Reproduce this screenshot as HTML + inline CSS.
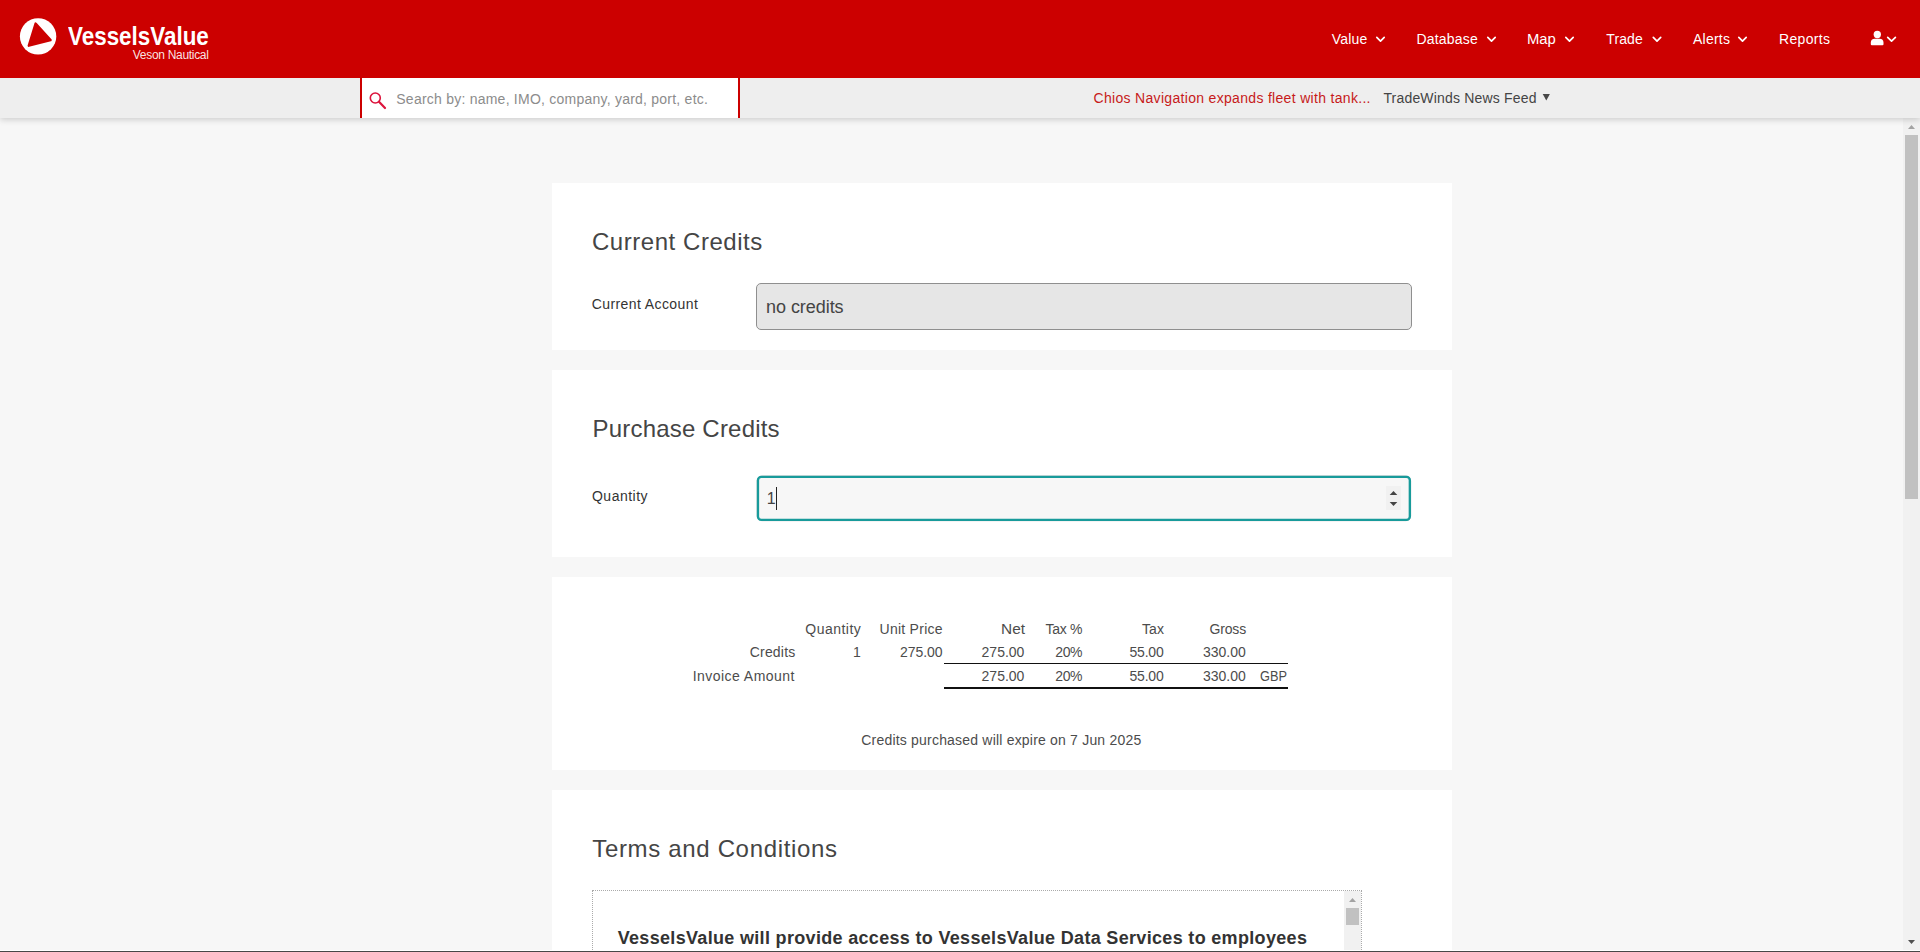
<!DOCTYPE html>
<html lang="en">
<head>
<meta charset="utf-8">
<title>VesselsValue - Purchase Credits</title>
<style>
html,body{margin:0;padding:0;}
html{overflow:hidden;}
body{width:1920px;height:952px;overflow:hidden;background:#f7f7f7;font-family:"Liberation Sans",sans-serif;}
#page{position:relative;width:1920px;height:952px;overflow:hidden;background:#f7f7f7;}
.abs{position:absolute;}
.t{position:absolute;white-space:nowrap;line-height:1em;}
#hdr{left:0;top:0;width:1920px;height:78px;background:#cc0000;}
#sub{left:0;top:78px;width:1920px;height:40px;background:#eeeeee;box-shadow:0 2px 6px rgba(0,0,0,.16);}
#srch{left:360px;top:78px;width:376px;height:40px;background:#fff;border-left:2px solid #cc0000;border-right:2px solid #cc0000;}
.panel{position:absolute;left:552px;width:900px;background:#fff;}
#p1{top:183px;height:167px;}
#p2{top:370px;height:187px;}
#p3{top:577px;height:193px;}
#p4{top:790px;height:170px;}
#in1{left:756px;top:283px;width:654px;height:45px;border:1px solid #8f8f8f;border-radius:5px;background:#e6e6e6;}
#spin{left:1386px;top:486px;width:15px;height:24px;background:#f1f1f1;}
#caret{left:776px;top:487px;width:1px;height:23px;background:#222;}
#ln1{left:944px;top:663px;width:344px;height:1px;background:#111;}
#ln2{left:944px;top:687px;width:344px;height:2px;background:#111;}
#tcbox{left:592px;top:890px;width:768px;height:80px;border:1px dotted #aaa;background:#fff;}
#tctrack{left:1344px;top:891px;width:17px;height:70px;background:#f1f1f1;}
#tcthumb{left:1346px;top:908px;width:13px;height:17px;background:#c1c1c1;}
#vtrack{left:1903px;top:118px;width:17px;height:834px;background:#f1f1f1;}
#vthumb{left:1905px;top:135px;width:13px;height:364px;background:#c1c1c1;}
#foot{left:0;top:950px;width:1920px;height:2px;background:#474747;border-top:1px solid #fff;box-sizing:border-box;}
svg{position:absolute;overflow:visible;}

</style>
</head>
<body>
<div id="page">
<main id="content">
<section id="p1" class="panel" aria-label="Current Credits"></section>
<section id="p2" class="panel" aria-label="Purchase Credits"></section>
<section id="p3" class="panel" aria-label="Invoice"></section>
<section id="p4" class="panel" aria-label="Terms and Conditions"></section>
<div id="in1" class="abs"></div>
<svg width="1920" height="952" viewBox="0 0 1920 952" style="left:0;top:0">
  <!-- focused quantity input ring -->
  <rect x="757.1" y="475.95" width="653.6" height="44.8" rx="5" fill="none" stroke="#b09a9a" stroke-opacity=".45" stroke-width="1"/>
  <rect id="in2" x="757.95" y="476.8" width="651.9" height="43.1" rx="3.4" fill="#f7f7f7" stroke="#189b9b" stroke-width="2.35"/>
</svg>
<div id="spin" class="abs"></div>
<div id="caret" class="abs"></div>
<div id="ln1" class="abs"></div>
<div id="ln2" class="abs"></div>
<div id="tcbox" class="abs"></div>
<div id="tctrack" class="abs"></div>
<div id="tcthumb" class="abs"></div>
<svg width="1920" height="952" viewBox="0 0 1920 952" style="left:0;top:0">
  <!-- spinner arrows -->
  <polygon points="1389.7,495 1397.3,495 1393.5,491" fill="#444"/>
  <polygon points="1389.7,502 1397.3,502 1393.5,506" fill="#444"/>
  <!-- terms scroll arrow -->
  <polygon points="1349,902 1356,902 1352.5,898" fill="#a3a3a3"/>
</svg>
<span id="h1" class="t" style="left:592.00px;top:229.68px;font-size:24px;color:#454545;letter-spacing:0.542px;">Current Credits</span>
<span id="l1" class="t" style="left:591.70px;top:297.15px;font-size:14px;color:#333;letter-spacing:0.409px;">Current Account</span>
<span id="v1" class="t" style="left:766.00px;top:297.66px;font-size:18px;color:#444;letter-spacing:-0.049px;">no credits</span>
<span id="h2" class="t" style="left:592.50px;top:416.68px;font-size:24px;color:#454545;letter-spacing:0.201px;">Purchase Credits</span>
<span id="l2" class="t" style="left:592.00px;top:489.15px;font-size:14px;color:#333;letter-spacing:0.480px;">Quantity</span>
<span id="v2" class="t" style="left:766.80px;top:491.16px;font-size:16px;color:#444;">1</span>
<span id="t_q" class="t" style="left:805.30px;top:621.95px;font-size:14px;color:#4c4c4c;letter-spacing:0.480px;">Quantity</span>
<span id="t_up" class="t" style="left:879.50px;top:621.95px;font-size:14px;color:#4c4c4c;letter-spacing:0.267px;">Unit Price</span>
<span id="t_net" class="t" style="left:1001.20px;top:621.95px;font-size:14px;color:#4c4c4c;transform:scaleX(1.1007);transform-origin:0 0;">Net</span>
<span id="t_txp" class="t" style="left:1045.60px;top:621.95px;font-size:14px;color:#4c4c4c;letter-spacing:-0.319px;">Tax %</span>
<span id="t_tx" class="t" style="left:1142.00px;top:621.95px;font-size:14px;color:#4c4c4c;letter-spacing:0.107px;">Tax</span>
<span id="t_gr" class="t" style="left:1209.50px;top:621.95px;font-size:14px;color:#4c4c4c;letter-spacing:-0.159px;">Gross</span>
<span id="r1_a" class="t" style="left:749.70px;top:645.15px;font-size:14px;color:#4c4c4c;letter-spacing:0.209px;">Credits</span>
<span id="r1_b" class="t" style="left:853.00px;top:645.15px;font-size:14px;color:#4c4c4c;">1</span>
<span id="r1_c" class="t" style="left:900.00px;top:645.15px;font-size:14px;color:#4c4c4c;letter-spacing:-0.047px;">275.00</span>
<span id="r1_d" class="t" style="left:981.60px;top:645.15px;font-size:14px;color:#4c4c4c;letter-spacing:-0.007px;">275.00</span>
<span id="r1_e" class="t" style="left:1055.30px;top:645.15px;font-size:14px;color:#4c4c4c;letter-spacing:-0.436px;">20%</span>
<span id="r1_f" class="t" style="left:1129.40px;top:645.15px;font-size:14px;color:#4c4c4c;letter-spacing:-0.162px;">55.00</span>
<span id="r1_g" class="t" style="left:1203.00px;top:645.15px;font-size:14px;color:#4c4c4c;letter-spacing:-0.007px;">330.00</span>
<span id="r2_a" class="t" style="left:692.70px;top:669.35px;font-size:14px;color:#4c4c4c;letter-spacing:0.461px;">Invoice Amount</span>
<span id="r2_d" class="t" style="left:981.60px;top:669.35px;font-size:14px;color:#4c4c4c;letter-spacing:-0.007px;">275.00</span>
<span id="r2_e" class="t" style="left:1055.30px;top:669.35px;font-size:14px;color:#4c4c4c;letter-spacing:-0.436px;">20%</span>
<span id="r2_f" class="t" style="left:1129.40px;top:669.35px;font-size:14px;color:#4c4c4c;letter-spacing:-0.162px;">55.00</span>
<span id="r2_g" class="t" style="left:1203.00px;top:669.35px;font-size:14px;color:#4c4c4c;letter-spacing:-0.007px;">330.00</span>
<span id="r2_h" class="t" style="left:1260.30px;top:669.35px;font-size:14px;color:#4c4c4c;transform:scaleX(0.9135);transform-origin:0 0;">GBP</span>
<span id="ex" class="t" style="left:861.30px;top:732.85px;font-size:14px;color:#4c4c4c;letter-spacing:0.197px;">Credits purchased will expire on 7 Jun 2025</span>
<span id="h3" class="t" style="left:592.30px;top:836.68px;font-size:24px;color:#454545;letter-spacing:0.662px;">Terms and Conditions</span>
<span id="tc" class="t" style="left:617.70px;top:928.51px;font-size:18px;color:#333;font-weight:700;letter-spacing:0.322px;">VesselsValue will provide access to VesselsValue Data Services to employees</span>
</main>
<div id="vscroll">
<div id="vtrack" class="abs"></div>
<div id="vthumb" class="abs"></div>
<svg width="1920" height="952" viewBox="0 0 1920 952" style="left:0;top:0">
  <polygon points="1908,129 1915,129 1911.5,125" fill="#a3a3a3"/>
  <polygon points="1908,940 1915,940 1911.5,944" fill="#505050"/>
</svg>
</div>
<header id="top">
<div id="sub" class="abs"></div>
<div id="srch" class="abs"></div>
<div id="hdr" class="abs"></div>
<svg id="icons" width="1920" height="952" viewBox="0 0 1920 952" style="left:0;top:0">
  <!-- logo -->
  <circle cx="38.1" cy="36.4" r="18.2" fill="#fff"/>
  <polygon points="35.6,23.6 50.6,40.0 28.8,45.7" fill="#cc0000" stroke="#cc0000" stroke-width="2.4" stroke-linejoin="round"/>
  <!-- nav chevrons -->
  <g fill="none" stroke="#fff" stroke-width="1.7" stroke-linecap="round" stroke-linejoin="round">
    <polyline points="1376.8,37.4 1380.5,41.1 1384.2,37.4"/>
    <polyline points="1487.8,37.4 1491.5,41.1 1495.2,37.4"/>
    <polyline points="1565.8,37.4 1569.5,41.1 1573.2,37.4"/>
    <polyline points="1653.3,37.4 1657,41.1 1660.7,37.4"/>
    <polyline points="1738.8,37.4 1742.5,41.1 1746.2,37.4"/>
    <polyline points="1887.7,37.4 1891.55,41.2 1895.4,37.4"/>
  </g>
  <!-- user icon -->
  <circle cx="1877.3" cy="34.5" r="3.65" fill="#fff"/>
  <path d="M1871.8,45.2 H1882.5 A1,1 0 0 0 1883.5,44.2 V42.8 A4,4 0 0 0 1879.5,38.8 H1874.8 A4,4 0 0 0 1870.8,42.8 V44.2 A1,1 0 0 0 1871.8,45.2 Z" fill="#fff"/>
  <!-- search icon -->
  <circle cx="375.3" cy="98" r="5" fill="none" stroke="#dc143c" stroke-width="1.6"/>
  <line x1="379" y1="101.8" x2="385" y2="108" stroke="#dc143c" stroke-width="2.2" stroke-linecap="round"/>
  <!-- tradewinds triangle -->
  <polygon points="1542.7,93.9 1549.9,93.9 1546.3,100.5" fill="#484848"/>
</svg>
<span id="lg1" class="t" style="left:67.60px;top:24.00px;font-size:25px;color:#fff;transform:scaleX(0.8964);transform-origin:0 0;font-weight:700;">VesselsValue</span>
<span id="lg2" class="t" style="left:132.80px;top:48.84px;font-size:12px;color:rgba(255,255,255,.9);letter-spacing:-0.307px;">Veson Nautical</span>
<span id="n1" class="t" style="left:1331.70px;top:31.95px;font-size:14px;color:#fff;letter-spacing:0.205px;">Value</span>
<span id="n2" class="t" style="left:1416.50px;top:31.95px;font-size:14px;color:#fff;letter-spacing:0.194px;">Database</span>
<span id="n3" class="t" style="left:1526.94px;top:31.95px;font-size:14px;color:#fff;transform:scaleX(1.0587);transform-origin:0 0;">Map</span>
<span id="n4" class="t" style="left:1606.30px;top:31.95px;font-size:14px;color:#fff;letter-spacing:0.108px;">Trade</span>
<span id="n5" class="t" style="left:1693.00px;top:31.95px;font-size:14px;color:#fff;letter-spacing:0.243px;">Alerts</span>
<span id="n6" class="t" style="left:1779.00px;top:31.95px;font-size:14px;color:#fff;letter-spacing:0.330px;">Reports</span>
<span id="sp" class="t" style="left:396.30px;top:91.85px;font-size:14px;color:#8c8c8c;letter-spacing:0.233px;">Search by: name, IMO, company, yard, port, etc.</span>
<span id="nw" class="t" style="left:1093.50px;top:91.45px;font-size:14px;color:#c71a1a;letter-spacing:0.314px;">Chios Navigation expands fleet with tank...</span>
<span id="tw" class="t" style="left:1383.40px;top:91.45px;font-size:14px;color:#444;letter-spacing:0.181px;">TradeWinds News Feed</span>
</header>
<div id="foot" class="abs"></div>

</div>
</body>
</html>
